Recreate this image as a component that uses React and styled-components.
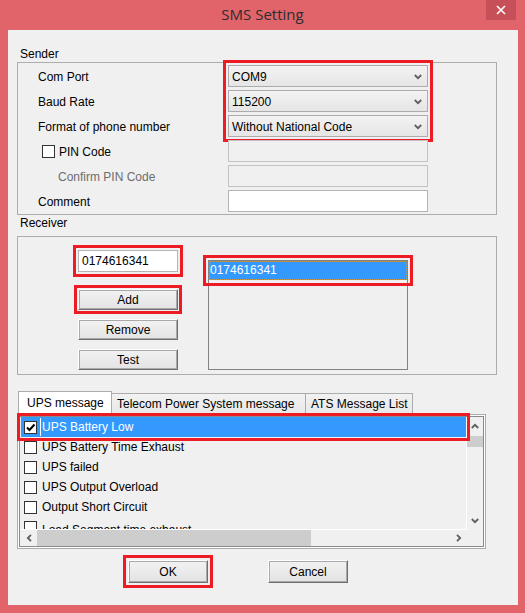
import React from "react";
import styled, { createGlobalStyle } from "styled-components";

const GlobalStyle = createGlobalStyle`
  html, body {
    margin: 0;
    padding: 0;
    background: #fff;
  }
  body {
    font-family: "Liberation Sans", Arial, sans-serif;
    font-size: 12px;
    color: #000;
  }
`;

const Window = styled.div`
  width: 525px;
  height: 613px;
  background: #e2646b;
  display: flex;
  flex-direction: column;
`;

const TitleBar = styled.div`
  height: 30px;
  display: flex;
  align-items: flex-start;
`;

const Title = styled.div`
  flex: 1;
  padding-left: 39px;
  text-align: center;
  line-height: 29px;
  font-family: "Open Sans", "Noto Sans", sans-serif;
  font-size: 15px;
  color: #2d2d2d;
`;

const CloseButton = styled.div`
  width: 30px;
  height: 20px;
  margin-right: 9px;
  background: #c75058;
  display: flex;
  align-items: center;
  justify-content: center;
`;

const Body = styled.div`
  margin: 0 7px 8px 8px;
  height: 575px;
  box-sizing: border-box;
  background: #f0f0f0;
  padding: 17px 0 0 9px;
  display: flex;
  flex-direction: column;
  align-items: flex-start;
`;

const GroupLabel = styled.div`
  margin: ${(p) => p.$top || 0}px 0 0 3px;
  line-height: 14px;
`;

const GroupBox = styled.div`
  width: 480px;
  box-sizing: border-box;
  border: 1px solid #adadad;
  margin-top: ${(p) => p.$top || 0}px;
`;

const SenderGrid = styled.div`
  display: grid;
  grid-template-columns: 190px 200px;
  grid-auto-rows: 22px;
  row-gap: 3px;
  align-items: center;
  padding: 2px 0 2px 20px;
`;

const FieldLabel = styled.div`
  grid-column: 1;
  padding-left: ${(p) => p.$indent || 0}px;
  padding-top: 1px;
  color: ${(p) => (p.$disabled ? "#6d6d6d" : "#000")};
  display: flex;
  align-items: center;
  gap: 4px;
`;

const ComboStack = styled.div`
  grid-column: 2;
  grid-row: 1 / span 3;
  display: flex;
  flex-direction: column;
  gap: 3px;
  outline: 3px solid #ed1c24;
  outline-offset: 2px;
`;

const Combo = styled.div`
  height: 22px;
  box-sizing: border-box;
  border: 1px solid #acacac;
  background: linear-gradient(#f3f3f3, #e5e5e5);
  display: flex;
  align-items: center;
  justify-content: space-between;
  padding: 1px 5px 0 3px;
`;

const TextBox = styled.div`
  grid-column: 2;
  height: 22px;
  width: ${(p) => p.$w || 200}px;
  box-sizing: border-box;
  border: 1px solid ${(p) => (p.$disabled ? "#c3c3c3" : "#b4b4b4")};
  background: ${(p) => (p.$disabled ? "#f0f0f0" : "#fff")};
  display: flex;
  align-items: center;
  padding-left: 3px;
  ${(p) => p.$marked && "outline: 3px solid #ed1c24; outline-offset: 2px;"}
`;

const CheckBox = styled.span`
  width: 13px;
  height: 13px;
  box-sizing: border-box;
  border: 1px solid #333;
  background: #fff;
  display: inline-flex;
  align-items: center;
  justify-content: center;
  flex: none;
`;

const ReceiverBox = styled(GroupBox)`
  height: 139px;
  display: flex;
  align-items: flex-start;
  gap: 30px;
  padding: 13px 0 0 60px;
`;

const ReceiverColumn = styled.div`
  width: 100px;
  display: flex;
  flex-direction: column;
  gap: 9px;
`;

const Button = styled.div`
  width: ${(p) => p.$w || 100}px;
  height: ${(p) => p.$h || 21}px;
  box-sizing: border-box;
  border: 1px solid;
  border-color: #fff #6f6f6f #6f6f6f #fff;
  box-shadow: inset 0 0 0 1px #a9a9a9;
  background: linear-gradient(#f2f2f2, #e3e3e3);
  display: flex;
  align-items: center;
  justify-content: center;
  ${(p) => p.$marked && `outline: 3px solid #ed1c24; outline-offset: ${p.$offset ?? 1}px;`}
`;

const ListBox = styled.div`
  width: 200px;
  height: 110px;
  box-sizing: border-box;
  border: 1px solid #838383;
  background: #f0f0f0;
  margin-top: 10px;
`;

const ListItem = styled.div`
  height: 19px;
  box-sizing: border-box;
  border: 1px dotted #c89a50;
  background: #3399ff;
  color: #fff;
  line-height: 17px;
  outline: 3px solid #ed1c24;
  outline-offset: 3px;
`;

const TabSection = styled.div`
  margin-top: 16px;
  display: flex;
  flex-direction: column;
`;

const TabStrip = styled.div`
  height: 23px;
  display: flex;
  align-items: flex-end;
  padding-left: 1px;
`;

const Tab = styled.div`
  width: ${(p) => p.$w}px;
  height: ${(p) => (p.$active ? 24 : 21)}px;
  margin-bottom: ${(p) => (p.$active ? -1 : 0)}px;
  margin-left: ${(p) => (p.$first ? 0 : -1)}px;
  box-sizing: border-box;
  border: 1px solid #acacac;
  border-bottom: none;
  background: ${(p) => (p.$active ? "#fff" : "linear-gradient(#f2f2f2, #e8e8e8)")};
  position: relative;
  z-index: ${(p) => (p.$active ? 1 : 0)};
  padding: ${(p) => (p.$active ? 4 : 3)}px 0 0 ${(p) => p.$pad}px;
  white-space: nowrap;
`;

const TabPanel = styled.div`
  width: 469px;
  height: 135px;
  box-sizing: border-box;
  border: 1px solid #acacac;
  background: #fff;
  padding: 1px;
`;

const CheckList = styled.div`
  height: 131px;
  box-sizing: border-box;
  border: 1px solid #8a8a8a;
  background: #f0f0f0;
  display: grid;
  grid-template-columns: 1fr 16px;
  grid-template-rows: 1fr 16px;
`;

const CheckArea = styled.div`
  border-right: 1px solid #fff;
  border-bottom: 1px solid #fff;
  padding-left: 1px;
`;

const CheckRow = styled.div`
  height: ${(p) => p.$h || 20}px;
  overflow: ${(p) => (p.$h ? "hidden" : "visible")};
  display: flex;
  align-items: ${(p) => (p.$h ? "flex-start" : "center")};
  padding: ${(p) => (p.$h ? "4px" : "0")} 0 0 3px;
  box-sizing: border-box;
  background: ${(p) => (p.$selected ? "#3399ff" : "transparent")};
  color: ${(p) => (p.$selected ? "#fff" : "#000")};
  ${(p) => p.$selected && "outline: 3px solid #ed1c24; outline-offset: 1px; position: relative; z-index: 2;"}
`;

const RowText = styled.span`
  margin-left: 3px;
  padding-left: 1px;
  border-left: 1px solid ${(p) => (p.$selected ? "#fff" : "transparent")};
  line-height: 18px;
  white-space: nowrap;
`;

const VScroll = styled.div`
  display: flex;
  flex-direction: column;
`;

const HScroll = styled.div`
  display: flex;
`;

const ArrowCell = styled.div`
  flex: none;
  width: ${(p) => (p.$h ? 17 : 16)}px;
  height: ${(p) => (p.$h ? 16 : 18)}px;
  display: flex;
  align-items: center;
  justify-content: center;
`;

const Thumb = styled.div`
  background: #cdcdcd;
  width: ${(p) => p.$w}px;
  height: ${(p) => p.$h}px;
  margin-top: ${(p) => p.$top || 0}px;
`;

const Spacer = styled.div`
  flex: 1;
`;

const Footer = styled.div`
  margin-top: 11px;
  padding-left: 111px;
  display: flex;
  gap: 60px;
`;

const Chevron = ({ dir = "down", color = "#5f5f5f" }) => {
  const rot = { down: 0, up: 180, left: 90, right: -90 }[dir];
  return (
    <svg width="8" height="6" viewBox="0 0 8 6" style={{ transform: `rotate(${rot}deg)` }}>
      <polyline points="0.8,1 4,4.2 7.2,1" fill="none" stroke={color} strokeWidth="1.8" />
    </svg>
  );
};

const messages = [
  "UPS Battery Low",
  "UPS Battery Time Exhaust",
  "UPS failed",
  "UPS Output Overload",
  "Output Short Circuit",
];

export default function App() {
  return (
    <>
      <GlobalStyle />
      <Window>
        <TitleBar>
          <Title>SMS Setting</Title>
          <CloseButton>
            <svg width="10" height="10" viewBox="0 0 10 10">
              <path d="M1 1 L9 9 M9 1 L1 9" stroke="#fff" strokeWidth="1.6" />
            </svg>
          </CloseButton>
        </TitleBar>
        <Body>
          <GroupLabel>Sender</GroupLabel>
          <GroupBox $top={1}>
            <SenderGrid>
              <FieldLabel>Com Port</FieldLabel>
              <ComboStack>
                <Combo>
                  COM9
                  <Chevron />
                </Combo>
                <Combo>
                  115200
                  <Chevron />
                </Combo>
                <Combo>
                  Without National Code
                  <Chevron />
                </Combo>
              </ComboStack>
              <FieldLabel>Baud Rate</FieldLabel>
              <FieldLabel>Format of phone number</FieldLabel>
              <FieldLabel $indent={4}>
                <CheckBox />
                PIN Code
              </FieldLabel>
              <TextBox $disabled />
              <FieldLabel $indent={20} $disabled>
                Confirm PIN Code
              </FieldLabel>
              <TextBox $disabled />
              <FieldLabel>Comment</FieldLabel>
              <TextBox />
            </SenderGrid>
          </GroupBox>

          <GroupLabel $top={1}>Receiver</GroupLabel>
          <ReceiverBox $top={6}>
            <ReceiverColumn>
              <TextBox $w={100} $marked style={{ marginBottom: 8 }}>
                0174616341
              </TextBox>
              <Button $marked>Add</Button>
              <Button>Remove</Button>
              <Button>Test</Button>
            </ReceiverColumn>
            <ListBox>
              <ListItem>0174616341</ListItem>
            </ListBox>
          </ReceiverBox>

          <TabSection>
            <TabStrip>
              <Tab $first $active $w={94} $pad={8}>
                UPS message
              </Tab>
              <Tab $w={195} $pad={5}>
                Telecom Power System message
              </Tab>
              <Tab $w={108} $pad={5}>
                ATS Message List
              </Tab>
            </TabStrip>
            <TabPanel>
              <CheckList>
                <CheckArea>
                  {messages.map((m, i) => (
                    <CheckRow key={m} $selected={i === 0}>
                      <CheckBox>
                        {i === 0 && (
                          <svg width="11" height="11" viewBox="0 0 11 11">
                            <path d="M2 5.5 L4.5 8 L9.5 2.5" fill="none" stroke="#000" strokeWidth="2" />
                          </svg>
                        )}
                      </CheckBox>
                      <RowText $selected={i === 0}>{m}</RowText>
                    </CheckRow>
                  ))}
                  <CheckRow $h={12}>
                    <CheckBox />
                    <RowText>Load Segment time exhaust</RowText>
                  </CheckRow>
                </CheckArea>
                <VScroll>
                  <ArrowCell>
                    <Chevron dir="up" />
                  </ArrowCell>
                  <Thumb $w={16} $h={11} $top={1} />
                  <Spacer />
                  <ArrowCell>
                    <Chevron dir="down" />
                  </ArrowCell>
                </VScroll>
                <HScroll>
                  <ArrowCell $h>
                    <Chevron dir="left" />
                  </ArrowCell>
                  <Thumb $w={274} $h={16} />
                  <Spacer />
                  <ArrowCell $h>
                    <Chevron dir="right" />
                  </ArrowCell>
                </HScroll>
                <div />
              </CheckList>
            </TabPanel>
          </TabSection>

          <Footer>
            <Button $w={80} $h={23} $marked $offset={2}>
              OK
            </Button>
            <Button $w={80} $h={23}>
              Cancel
            </Button>
          </Footer>
        </Body>
      </Window>
    </>
  );
}
